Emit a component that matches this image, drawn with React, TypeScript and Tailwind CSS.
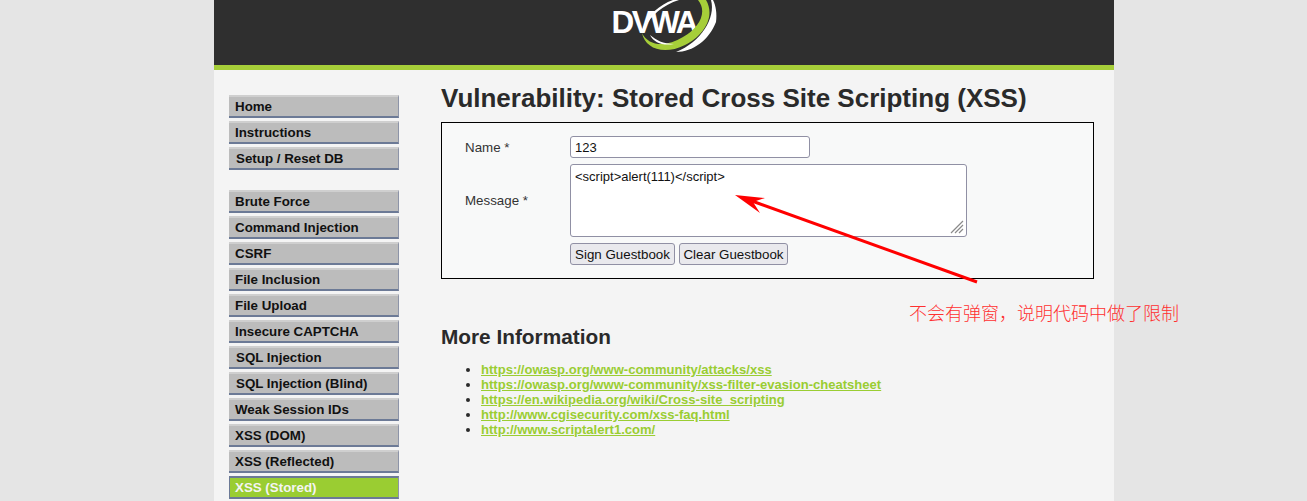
const sans = "font-['Liberation_Sans',Arial,sans-serif]";

const topMenu = ["Home", "Instructions", "Setup / Reset DB"];
const vulnMenu = [
  "Brute Force",
  "Command Injection",
  "CSRF",
  "File Inclusion",
  "File Upload",
  "Insecure CAPTCHA",
  "SQL Injection",
  "SQL Injection (Blind)",
  "Weak Session IDs",
  "XSS (DOM)",
  "XSS (Reflected)",
  "XSS (Stored)",
];
const links = [
  "https://owasp.org/www-community/attacks/xss",
  "https://owasp.org/www-community/xss-filter-evasion-cheatsheet",
  "https://en.wikipedia.org/wiki/Cross-site_scripting",
  "http://www.cgisecurity.com/xss-faq.html",
  "http://www.scriptalert1.com/",
];

function MenuItem({ label }: { label: string }) {
  const active = label === "XSS (Stored)";
  const nudged = label === "Setup / Reset DB" || label.startsWith("SQL");
  return (
    <li
      className={`flex h-[23px] items-center border-b-2 border-r border-t-2 border-r-[#8d94a8] border-b-[#6c7a96] text-[13.33px] font-bold ${
        active
          ? "border-l border-l-[#6c7a96] border-t-[#6c7a96] bg-[#9acd32] pl-[5px] text-[#f4f4f4]"
          : `border-t-[#cfcfcf] bg-[#bcbcbc] text-[#111] ${nudged ? "pl-[7px]" : "pl-[6px]"}`
      }`}
    >
      {label}
    </li>
  );
}

function Logo() {
  return (
    <div className="relative h-[52px] w-[106px]">
      <span className="absolute left-[-1px] top-[4px] text-[31.5px] font-bold leading-[36px] tracking-[-2.5px] text-white">
        DVWA
      </span>
      <svg className="absolute left-0 top-0" width="106" height="53" viewBox="0 0 106 53">
        <path d="M29 33 C32 48 50 56 72 45 C90 36 103 17 93 0 L85 0 C95 12 86 28 70 37 C54 47 36 47 29 33 Z" fill="#a6ce39" />
        <path d="M63 52 C80 52 96 40 103 22 C104 14 103 6 100 0 L98 0 C103 18 88 42 63 52 Z" fill="#fff" />
        <path d="M30 28 C35 15 46 5 60 0 L66 0 C50 5 38 15 32 28 Z" fill="#fff" />
        <path d="M37 35 C43 40 50 44 61 44 C50 46 41 43 37 35 Z" fill="#fff" />
      </svg>
    </div>
  );
}

function GuestbookForm() {
  return (
    <div className="mt-[9px] h-[157px] w-[653px] border border-black bg-[#f8f9f9] pl-[23px] pt-[13px] text-[13.33px] text-[#333]">
      <div className="flex h-[22px] items-center">
        <label className="w-[105px] pt-px">Name *</label>
        <div className="flex h-[22px] w-[240px] items-center rounded-[3px] border border-[#9090a4] bg-white pl-[4px] pt-px text-[13px] text-[#111]">
          123
        </div>
      </div>
      <div className="mt-[6px] flex items-center">
        <label className="w-[105px]">Message *</label>
        <div className="relative h-[73px] w-[397px] rounded-[3px] border border-[#9090a4] bg-white pl-[4px] pt-[2px] text-[13px] text-[#111]">
          {"<script>alert(111)</script>"}
          <svg className="absolute bottom-[2px] right-[2px]" width="14" height="14" viewBox="0 0 14 14">
            <path d="M1 13 L13 1 M5 13 L13 5 M9 13 L13 9" stroke="#8a8a8a" strokeWidth="1.2" />
          </svg>
        </div>
      </div>
      <div className="ml-[105px] mt-[6px] flex gap-[4px] text-[#111]">
        <button className="h-[22px] w-[105px] rounded-[3px] border border-[#9090a4] bg-[#e9e9ed] pt-px">Sign Guestbook</button>
        <button className="h-[22px] w-[109px] rounded-[3px] border border-[#9090a4] bg-[#e9e9ed] pt-px">Clear Guestbook</button>
      </div>
    </div>
  );
}

export default function App() {
  return (
    <div className={`relative h-[501px] overflow-hidden bg-[#e5e5e5] ${sans}`}>
      <div className="ml-[214px] h-full w-[900px] bg-[#f4f4f4]">
        <header className="flex h-[70px] justify-center border-b-[5px] border-[#a6ce39] bg-[#2f2f2f] pl-[3px]">
          <Logo />
        </header>
        <div className="flex">
          <nav className="ml-[15px] mt-[25px] w-[170px]">
            <ul className="flex flex-col gap-[3px]">
              {topMenu.map((m) => (
                <MenuItem key={m} label={m} />
              ))}
            </ul>
            <ul className="mt-[20px] flex flex-col gap-[3px]">
              {vulnMenu.map((m) => (
                <MenuItem key={m} label={m} />
              ))}
            </ul>
          </nav>
          <main className="ml-[42px] flex-1">
            <h1 className="mt-[13px] text-[26px] font-bold leading-[30px] text-[#2a2a2a]">
              Vulnerability: Stored Cross Site Scripting (XSS)
            </h1>
            <GuestbookForm />
            <h2 className="mt-[46px] text-[20.8px] font-bold leading-[24px] text-[#2a2a2a]">More Information</h2>
            <ul className="ml-[40px] mt-[13px] list-disc text-[13.05px] font-bold leading-[15px] text-[#2a2a2a]">
              {links.map((l) => (
                <li key={l}>
                  <a className="text-[#9acd32] underline" href="#">
                    {l}
                  </a>
                </li>
              ))}
            </ul>
          </main>
        </div>
      </div>

      {/* annotation drawn over the screenshot */}
      <svg className="absolute left-0 top-0" width="1307" height="501" viewBox="0 0 1307 501">
        <path d="M977 282 L752 201" stroke="#ff0000" strokeWidth="3" fill="none" />
        <path d="M735 195 L765 198 L753 202 L760 213 Z" fill="#ff0000" />
      </svg>
      <span className="absolute left-[909px] top-[301px] font-['Noto_Sans_CJK_SC',sans-serif] text-[18px] font-light leading-[22px] text-[#ff3030]">
        不会有弹窗，说明代码中做了限制
      </span>
    </div>
  );
}
